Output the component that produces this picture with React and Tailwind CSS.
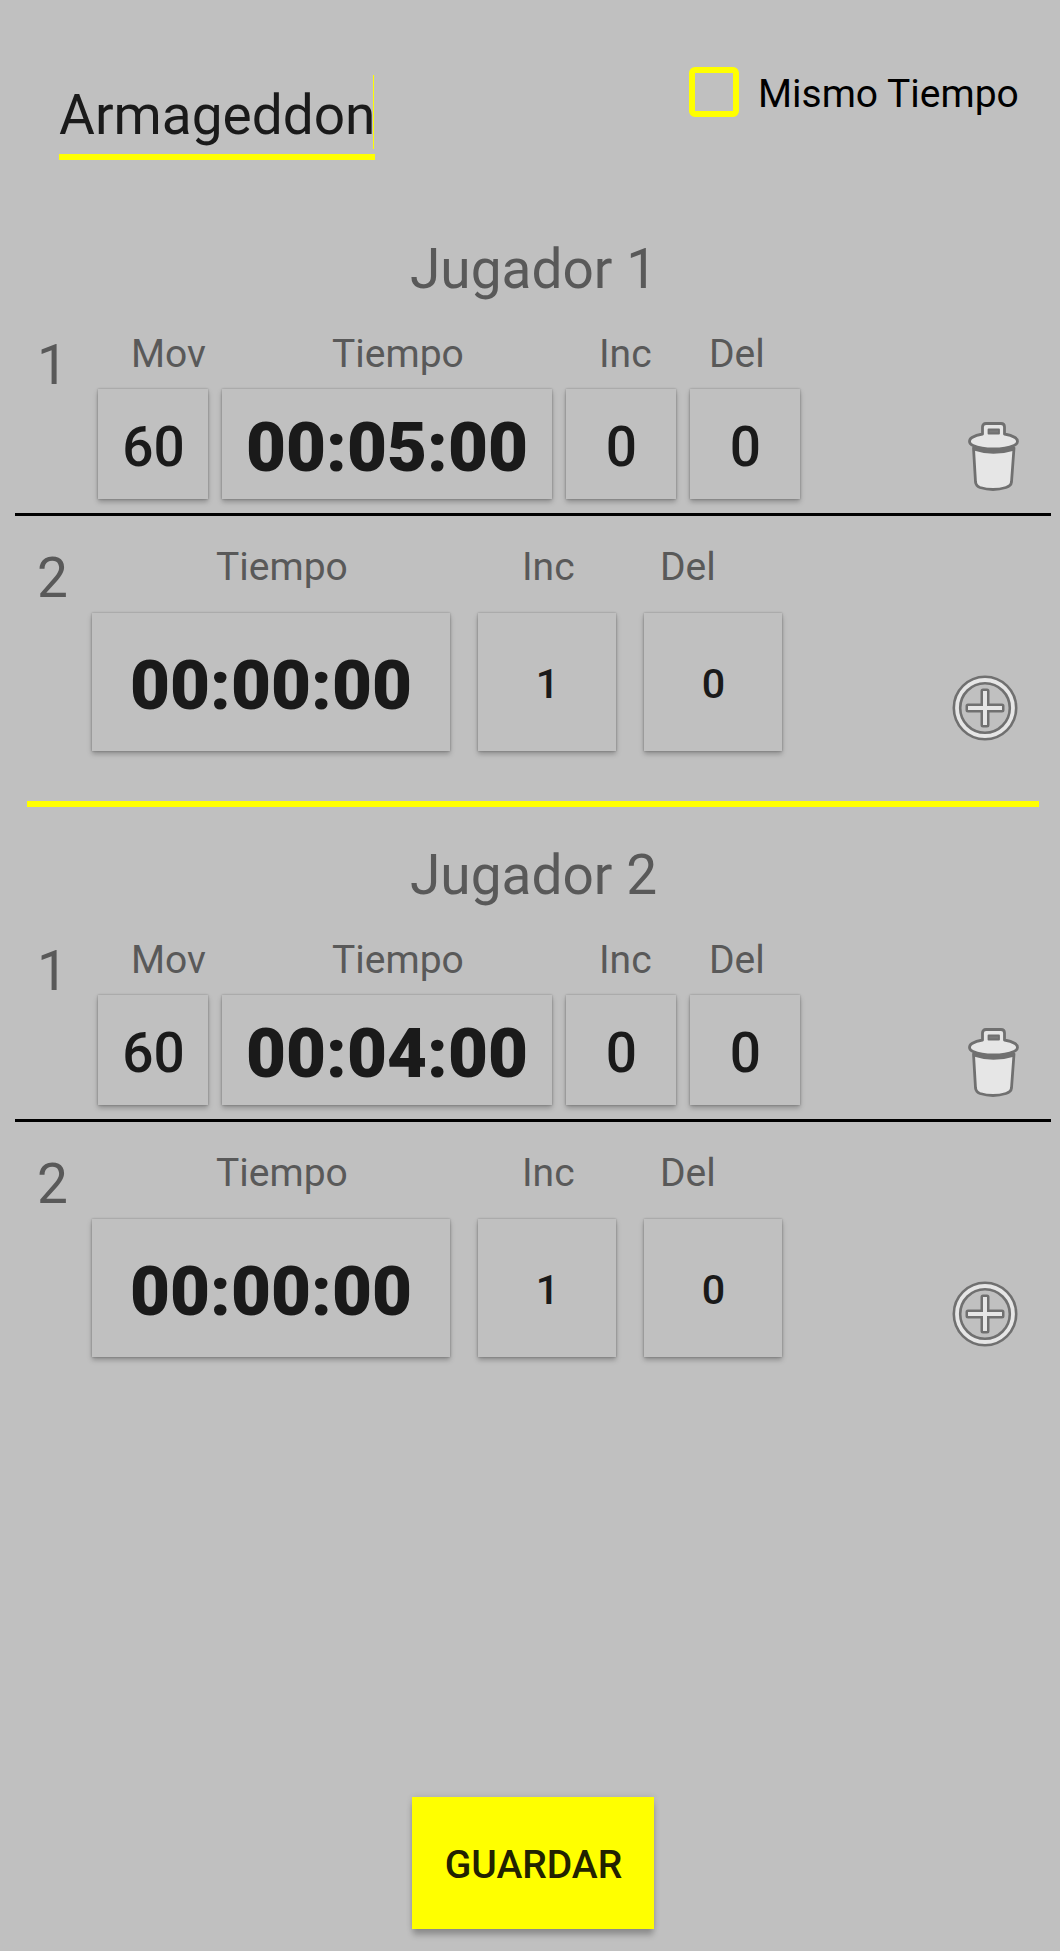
import { useState } from 'react';
import clsx from 'clsx';

const players = [
  { name: 'Jugador 1', moves: '60', time: '00:05:00', inc: '0', del: '0', extra: { time: '00:00:00', inc: '1', del: '0' } },
  { name: 'Jugador 2', moves: '60', time: '00:04:00', inc: '0', del: '0', extra: { time: '00:00:00', inc: '1', del: '0' } },
];

export default function App() {
  const [sameTime, setSameTime] = useState(false);

  return (
    <div className="w-[1060px] h-[1951px] bg-[#c0c0c0] font-[Roboto,sans-serif] text-[#1a1a1a] flex flex-col overflow-hidden">
      {/* Header */}
      <header className="h-[201px] shrink-0 flex items-start justify-between pl-[59px]">
        <div className="relative mt-[75px] w-[316px] h-[85px] border-b-6 border-[#ffff00]">
          <span className="block pt-[3px] text-[55px] leading-[74px] whitespace-nowrap">Armageddon</span>
          <span className="absolute right-[1px] top-0 w-px h-[74px] bg-[#ffff00]" />
        </div>
        <button
          onClick={() => setSameTime(!sameTime)}
          className="mt-[67px] w-[371px] flex items-center text-black"
        >
          <span className={clsx('size-[50px] rounded-[6px] border-6 border-[#ffff00]', sameTime && 'bg-[#ffff00]')} />
          <span className="ml-[19px] mt-[3px] text-[39px] leading-[46px] whitespace-nowrap">Mismo Tiempo</span>
        </button>
      </header>

      {players.map((player, i) => (
        <PlayerSection key={player.name} player={player} last={i === players.length - 1} />
      ))}

      {/* Save */}
      <footer className="mt-auto mb-[22px] pl-[412px]">
        <button className="w-[242px] h-[132px] pt-[4px] pl-px bg-[#ffff00] text-[#222200] text-[39px] leading-[46px] font-medium shadow-[0_0_6px_rgba(0,0,0,0.12),0_7px_6px_-1px_rgba(0,0,0,0.24)]">
          GUARDAR
        </button>
      </footer>
    </div>
  );
}

function PlayerSection({ player, last }) {
  return (
    <section className="shrink-0">
      <h2 className="pt-[31px] h-[109px] pl-[410px] text-[55px] leading-[74px] text-[#595959]">{player.name}</h2>

      {/* First control: limited number of moves */}
      <div className="h-[206px] ml-[15px] w-[1036px] border-b-3 border-black flex">
        <RowNumber className="pt-[23px]" value="1" />
        <div className="w-[762px]">
          <div className="h-[79px] pt-[21px] flex">
            <Label className="ml-[33px] w-[201px]">Mov</Label>
            <Label className="w-[267px]">Tiempo</Label>
            <Label className="w-[110px]">Inc</Label>
            <Label>Del</Label>
          </div>
          <div className="flex gap-[14px]">
            <Field className="size-[110px] pt-[7px] pl-px text-[55px] font-medium">{player.moves}</Field>
            <Field className="w-[330px] h-[110px] pt-[7px] text-[69px] tracking-[0.1px] font-black">{player.time}</Field>
            <Field className="size-[110px] pt-[7px] pl-px text-[55px] font-medium">{player.inc}</Field>
            <Field className="size-[110px] pt-[7px] pl-px text-[55px] font-medium">{player.del}</Field>
          </div>
        </div>
        <button className="mt-[111px] ml-[108px] w-[52px] h-[72px]">
          <TrashIcon />
        </button>
      </div>

      {/* Second control: rest of the game */}
      <div className="h-[285px] ml-[15px] w-[1036px] flex">
        <RowNumber className="pt-[30px]" value="2" />
        <div className="-ml-[6px] w-[762px]">
          <div className="h-[97px] pt-[28px] flex">
            <Label className="ml-[124px] w-[306px]">Tiempo</Label>
            <Label className="w-[138px]">Inc</Label>
            <Label>Del</Label>
          </div>
          <div className="flex gap-[28px]">
            <Field className="w-[358px] h-[138px] pt-[7px] text-[69px] tracking-[0.1px] font-black">{player.extra.time}</Field>
            <Field className="size-[138px] pt-[5px] pl-px text-[41.25px] font-medium">{player.extra.inc}</Field>
            <Field className="size-[138px] pt-[5px] pl-px text-[41.25px] font-medium">{player.extra.del}</Field>
          </div>
        </div>
        <button className="mt-[158.5px] ml-[98px] size-[66px]">
          <AddIcon />
        </button>
      </div>

      {!last && <div className="ml-[27px] w-[1012px] h-[6px] bg-[#ffff00]" />}
    </section>
  );
}

function RowNumber({ value, className }) {
  return (
    <span className={clsx('w-[83px] pl-[22px] text-[55px] leading-[64px] text-[#595959]', className)}>{value}</span>
  );
}

function Label({ className, children }) {
  return (
    <span className={clsx('text-[39px] leading-[46px] text-[#595959]', className)}>{children}</span>
  );
}

function Field({ className, children }) {
  return (
    <button
      className={clsx(
        'shrink-0 leading-none bg-[#c0c0c0] shadow-[0_0_2px_rgba(0,0,0,0.28),0_3px_5px_rgba(0,0,0,0.26)]',
        className
      )}
    >
      {children}
    </button>
  );
}

function TrashIcon() {
  return (
    <svg viewBox="0 0 52 72" className="w-full h-full" fill="#e6e6e6" stroke="#707070" strokeWidth="2.8" strokeLinejoin="round">
      <path d="M5.500 27 L7.500 61 Q8 65 12 66.500 Q25 70.500 38 66.500 Q43 65 43.500 61 L46 27 Z" />
      <path d="M5.500 27 Q25 33.500 46 27" fill="none" strokeWidth="5" />
      <path d="M14.500 13 V6 Q14.500 2.500 18 2.500 H33 Q36.500 2.500 36.500 6 V13 Q43 14 47 16.500 Q49.500 18 49.500 20.500 Q49.500 23 46 24.500 Q38 28 25.500 28 Q13 28 5 24.500 Q1.500 23 1.500 20.500 Q1.500 18 4 16.500 Q8 14 14.500 13 Z" />
      <rect x="20.500" y="8.500" width="10.500" height="4" fill="#7c7c7c" strokeWidth="1.800" />
    </svg>
  );
}

function AddIcon() {
  return (
    <svg viewBox="0 0 66 66" className="w-full h-full" fill="none">
      <circle cx="33" cy="33" r="28" stroke="#707070" strokeWidth="9" />
      <circle cx="33" cy="33" r="28" stroke="#e6e6e6" strokeWidth="3.800" />
      <path
        d="M31 16 H35 V31 H50 V35 H35 V50 H31 V35 H16 V31 H31 Z"
        fill="#e6e6e6"
        stroke="#707070"
        strokeWidth="5"
        strokeLinejoin="round"
        style={{ paintOrder: 'stroke' }}
      />
    </svg>
  );
}
